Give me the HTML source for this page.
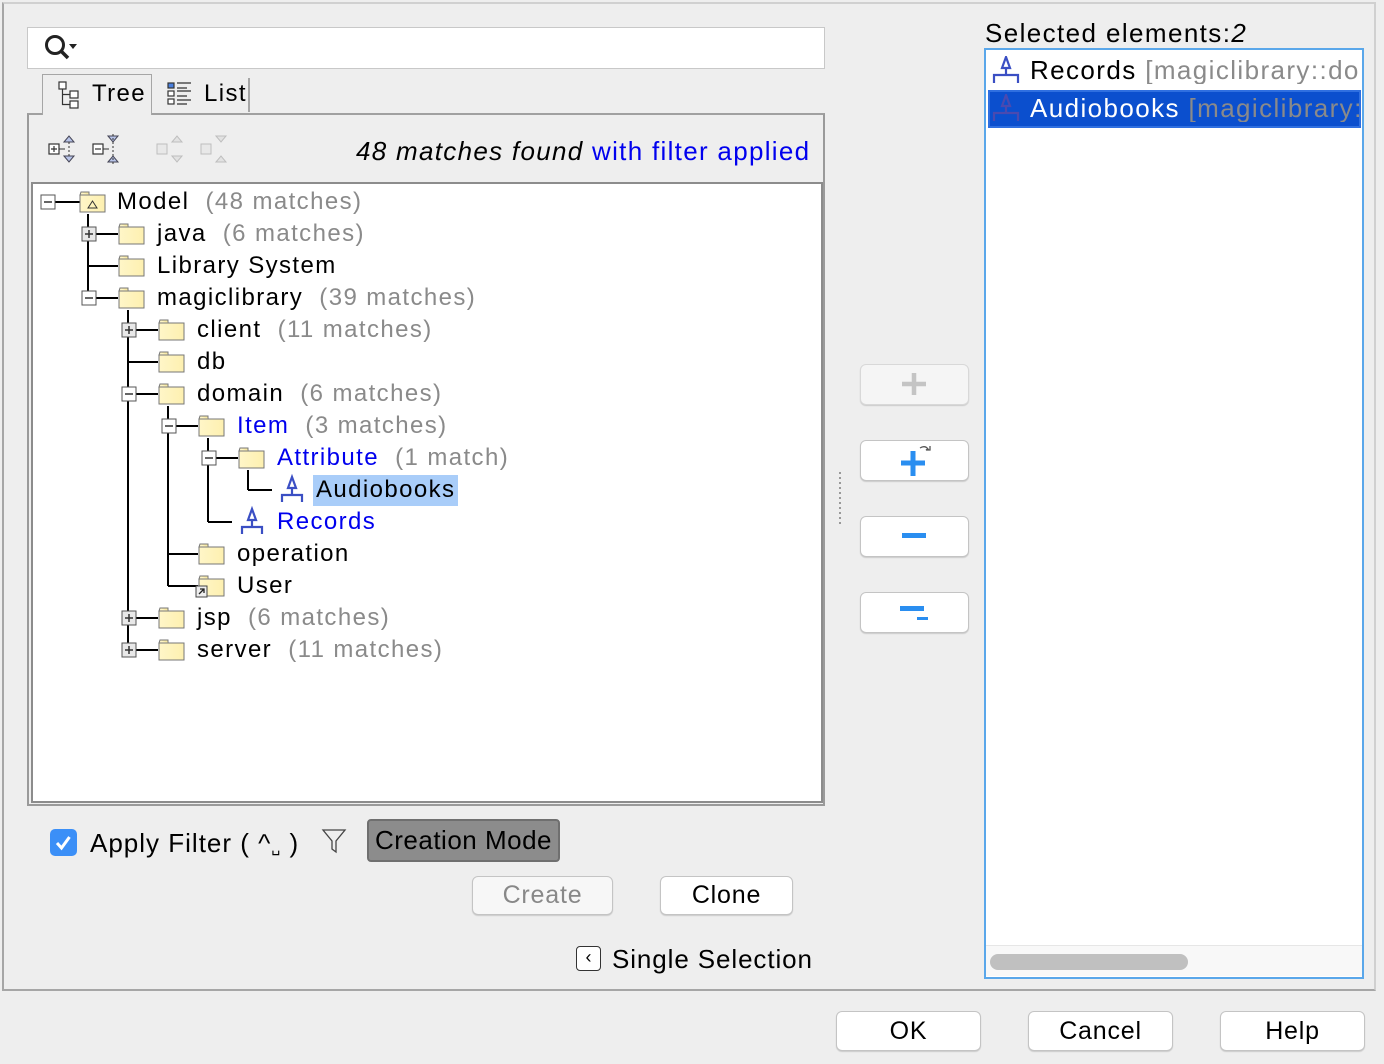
<!DOCTYPE html>
<html><head><meta charset="utf-8"><style>
*{box-sizing:border-box;margin:0;padding:0}
body{width:1384px;height:1064px;background:#eeeeee;font-family:"Liberation Sans",sans-serif;position:relative;overflow:hidden;color:#000}
.a{position:absolute}
.t{position:absolute;font-size:24px;line-height:28px;white-space:nowrap;letter-spacing:1.4px}
.g{color:#8a8a8a}
.b{color:#0000ee}
.btn{position:absolute;background:#fff;border:1px solid #c4c4c4;border-radius:6px;box-shadow:0 1px 1px rgba(0,0,0,.15);font-size:25px;text-align:center;letter-spacing:0.8px}
</style></head><body>
<div class="a" style="left:2px;top:2px;width:1374px;height:989px;border:2px solid #a6a6a6;border-top-color:#d0d0d0;border-right-color:#d0d0d0"></div>

<div class="a" style="left:27px;top:27px;width:798px;height:42px;background:#fff;border:1px solid #c8c8c8"></div>
<svg class="a" style="left:40px;top:32px" width="40" height="32"><circle cx="15" cy="13" r="8.5" fill="none" stroke="#222" stroke-width="3"/><line x1="21" y1="19" x2="28" y2="26" stroke="#222" stroke-width="3.5"/><path d="M29 12h8l-4 5z" fill="#222"/></svg>

<div class="a" style="left:27px;top:113px;width:798px;height:693px;border:2px solid #9a9a9a;border-top-color:#a0a0a0"></div>
<div class="a" style="left:42px;top:74px;width:110px;height:41px;background:#eee;border:1px solid #a6a6a6;border-bottom:none"></div>
<div class="a" style="left:248px;top:78px;width:2px;height:34px;background:#a6a6a6"></div>
<svg class="a" style="left:56px;top:80px" width="28" height="30"><g fill="#fff" stroke="#333" stroke-width="1.2"><rect x="3" y="2" width="7" height="7"/><rect x="14" y="11" width="8" height="7"/><rect x="14" y="21" width="8" height="7"/></g><path d="M6.5 9v15.5h7.5M6.5 14.5h7.5" fill="none" stroke="#333" stroke-width="1.2"/></svg>
<div class="t" style="left:92px;top:80px">Tree</div>
<svg class="a" style="left:165px;top:80px" width="32" height="30"><g fill="#fff" stroke="#333" stroke-width="1.2"><rect x="3" y="3" width="6" height="5" fill="#4a80e0"/><rect x="3" y="11" width="6" height="5"/><rect x="3" y="19" width="6" height="5"/></g><path d="M12 3h14M12 8h10M12 11h14M12 16h10M12 20h14M12 24h10" stroke="#333" stroke-width="1.3"/></svg>
<div class="t" style="left:204px;top:80px">List</div>

<svg class="a" style="left:46px;top:134px" width="200" height="34">
<g stroke="#333" fill="#fff" stroke-width="1.2"><rect x="3" y="10" width="10" height="10"/><path d="M5 15h6M8 12v6"/><rect x="47" y="10" width="10" height="10"/><path d="M49 15h6"/></g>
<path d="M13 15h6M57 15h6" stroke="#333"/>
<g fill="#b8c4e8" stroke="#445"><path d="M18 8l5-6 5 6z"/><path d="M18 22l5 6 5-6z"/><path d="M62 2l5 6 5-6z"/><path d="M62 28l5-6 5 6z"/></g>
<path d="M23 8v14M67 0v30" stroke="#333" stroke-dasharray="2 2"/>
<g opacity=".35"><g stroke="#666" fill="#ddd"><rect x="111" y="10" width="10" height="10"/><rect x="155" y="10" width="10" height="10"/><path d="M126 8l5-6 5 6zM126 22l5 6 5-6zM170 2l5 6 5-6zM170 28l5-6 5 6z" fill="#ccc"/></g></g>
</svg>
<div class="t" style="left:356px;top:137px;font-size:26px;letter-spacing:1.3px"><i>48 matches found</i> <span class="b">with filter applied</span></div>

<div class="a" style="left:31px;top:182px;width:792px;height:621px;background:#fff;border:2px solid #8c8c8c"></div>

<svg class="a" style="left:0;top:0" width="830" height="700">
<g stroke="#000" stroke-width="2" fill="none">
<path d="M88 214V298M128 310V650M168 406V586M208 438V522M248 470V490"/>
<path d="M48 202h32M88 234h30M88 266h30M88 298h30M128 330h30M128 362h30M128 394h30M128 618h30M128 650h30M168 426h30M168 554h30M168 586h30M208 458h30M248 490h24M208 522h24"/>
</g>
<defs>
<linearGradient id="fg" x1="0" x2="1"><stop offset="0" stop-color="#fff6c8"/><stop offset="1" stop-color="#fdf0b0"/></linearGradient>
<g id="fold"><path d="M0 4h9v-3h-8zM0 4h25v17h-25z" fill="url(#fg)" stroke="#777" stroke-width="1"/><path d="M1 1h8v3" fill="#f8eaa6" stroke="#777"/></g>
<g id="attr" stroke="#3b4fc4" stroke-width="2.2" fill="none"><path d="M12 1l-4 11h8z" fill="#fff"/><path d="M12 12v7M2 26v-7h20v7"/></g>
<g id="pl"><rect x="-7" y="-7" width="14" height="14" fill="#e8e8e8" stroke="#555"/><path d="M-4 0h8M0 -4v8" stroke="#333" stroke-width="1.5"/></g>
<g id="mi"><rect x="-7" y="-7" width="14" height="14" fill="#fff" stroke="#555"/><path d="M-4 0h8" stroke="#333" stroke-width="1.5"/></g>
</defs>
<use href="#mi" x="48" y="202"/><use href="#pl" x="89" y="234"/><use href="#mi" x="89" y="298"/>
<use href="#pl" x="129" y="330"/><use href="#mi" x="129" y="394"/><use href="#mi" x="169" y="426"/><use href="#mi" x="209" y="458"/>
<use href="#pl" x="129" y="618"/><use href="#pl" x="129" y="650"/>
<use href="#fold" x="80" y="191"/><path d="M88 208l4.5-7 4.5 7z" fill="none" stroke="#333"/>
<use href="#fold" x="119" y="223"/><use href="#fold" x="119" y="255"/><use href="#fold" x="119" y="287"/>
<use href="#fold" x="159" y="319"/><use href="#fold" x="159" y="351"/><use href="#fold" x="159" y="383"/>
<use href="#fold" x="199" y="415"/><use href="#fold" x="239" y="447"/>
<use href="#fold" x="199" y="543"/><use href="#fold" x="199" y="575"/>
<rect x="196" y="586" width="11" height="11" fill="#eee" stroke="#444"/><path d="M199 594l5-5M200 589h4v4" stroke="#222" fill="none" stroke-width="1.3"/>
<use href="#fold" x="159" y="607"/><use href="#fold" x="159" y="639"/>
<use href="#attr" x="280" y="476"/><use href="#attr" x="240" y="508"/>
</svg>
<div class="a" style="left:313px;top:475px;width:145px;height:31px;background:#a9cdf9"></div>
<div class="t" style="left:117px;top:188px">Model <span class="g">&nbsp;(48 matches)</span></div>
<div class="t" style="left:157px;top:220px">java <span class="g">&nbsp;(6 matches)</span></div>
<div class="t" style="left:157px;top:252px">Library System</div>
<div class="t" style="left:157px;top:284px">magiclibrary <span class="g">&nbsp;(39 matches)</span></div>
<div class="t" style="left:197px;top:316px">client <span class="g">&nbsp;(11 matches)</span></div>
<div class="t" style="left:197px;top:348px">db</div>
<div class="t" style="left:197px;top:380px">domain <span class="g">&nbsp;(6 matches)</span></div>
<div class="t" style="left:237px;top:412px"><span class="b">Item</span> <span class="g">&nbsp;(3 matches)</span></div>
<div class="t" style="left:277px;top:444px"><span class="b">Attribute</span> <span class="g">&nbsp;(1 match)</span></div>
<div class="t" style="left:316px;top:476px">Audiobooks</div>
<div class="t b" style="left:277px;top:508px">Records</div>
<div class="t" style="left:237px;top:540px">operation</div>
<div class="t" style="left:237px;top:572px">User</div>
<div class="t" style="left:197px;top:604px">jsp <span class="g">&nbsp;(6 matches)</span></div>
<div class="t" style="left:197px;top:636px">server <span class="g">&nbsp;(11 matches)</span></div>

<div class="a" style="left:50px;top:829px;width:27px;height:27px;background:#3b8ff7;border-radius:5px"></div>
<svg class="a" style="left:50px;top:829px" width="27" height="27"><path d="M7 14l4.5 5 8-11" stroke="#fff" stroke-width="3" fill="none"/></svg>
<div class="t" style="left:90px;top:829px;font-size:26px;letter-spacing:1px">Apply Filter ( ^<span style="font-size:14px">␣</span> )</div>
<svg class="a" style="left:321px;top:828px" width="26" height="26"><path d="M2 2h22l-9 11v11l-4 -3v-8z" fill="none" stroke="#444" stroke-width="1.3"/></svg>
<div class="a" style="left:367px;top:819px;width:193px;height:43px;background:#8c8c8c;border:2px solid #6f6f6f;border-radius:4px;font-size:26px;line-height:38px;text-align:center;letter-spacing:0.5px">Creation Mode</div>
<div class="btn" style="left:472px;top:876px;width:141px;height:39px;line-height:37px;color:#888;background:#f7f7f7">Create</div>
<div class="btn" style="left:660px;top:876px;width:133px;height:39px;line-height:37px">Clone</div>
<div class="a" style="left:576px;top:946px;width:25px;height:25px;border:1.5px solid #333;border-radius:4px;background:#fff;text-align:center;font-size:18px;line-height:21px">‹</div>
<div class="t" style="left:612px;top:945px;font-size:26px;letter-spacing:0.9px">Single Selection</div>

<svg class="a" style="left:837px;top:470px" width="6" height="56"><path d="M3 2v52" stroke="#999" stroke-width="2" stroke-dasharray="2 3"/></svg>
<div class="btn" style="left:860px;top:364px;width:109px;height:41px;background:#f5f5f5;border-color:#d8d8d8"></div>
<svg class="a" style="left:900px;top:372px" width="28" height="24"><path d="M14 1v22M2 12h24" stroke="#c4c4c4" stroke-width="4.5"/></svg>
<div class="btn" style="left:860px;top:440px;width:109px;height:41px"></div>
<svg class="a" style="left:898px;top:444px" width="36" height="34"><path d="M15 7v25M3 19h24" stroke="#2a8ef0" stroke-width="5"/><path d="M22 4q5-3 8 1l-2 1h4v-4" fill="none" stroke="#555" stroke-width="1.3"/></svg>
<div class="btn" style="left:860px;top:516px;width:109px;height:41px"></div>
<div class="a" style="left:902px;top:533px;width:24px;height:5px;background:#2a8ef0"></div>
<div class="btn" style="left:860px;top:592px;width:109px;height:41px"></div>
<div class="a" style="left:900px;top:606px;width:24px;height:5px;background:#2a8ef0"></div>
<div class="a" style="left:917px;top:617px;width:11px;height:3px;background:#2a8ef0"></div>

<div class="t" style="left:985px;top:19px;font-size:26px;letter-spacing:1.4px">Selected elements:<i>2</i></div>
<div class="a" style="left:984px;top:48px;width:380px;height:931px;background:#fff;border:2px solid #5aa7ea"></div>
<svg class="a" style="left:990px;top:56px" width="32" height="30"><path d="M16 1l-4 11h8z" fill="#fff" stroke="#3b4fc4" stroke-width="2.2"/><path d="M16 12v7M4 27v-8h24v8" fill="none" stroke="#3b4fc4" stroke-width="2.2"/></svg>
<div class="t" style="left:1030px;top:56px;font-size:26px;width:330px;overflow:hidden">Records <span class="g">[magiclibrary::domain]</span></div>
<div class="a" style="left:988px;top:90px;width:373px;height:38px;background:#0b4fce;border:2px solid #2f6fe0"></div>
<svg class="a" style="left:990px;top:94px" width="32" height="30"><path d="M16 1l-4 11h8z" fill="none" stroke="#4a4ab0" stroke-width="2.2"/><path d="M16 12v7M4 27v-8h24v8" fill="none" stroke="#4a4ab0" stroke-width="2.2"/></svg>
<div class="t" style="left:1030px;top:94px;font-size:26px;width:330px;overflow:hidden;color:#fff">Audiobooks <span style="color:#8a8a8a">[magiclibrary::domain]</span></div>
<div class="a" style="left:986px;top:945px;width:376px;height:31px;background:#f8f8f8;border-top:1px solid #e6e6e6"></div>
<div class="a" style="left:990px;top:954px;width:198px;height:16px;background:#c0c0c0;border-radius:8px"></div>

<div class="btn" style="left:836px;top:1011px;width:145px;height:40px;line-height:38px">OK</div>
<div class="btn" style="left:1028px;top:1011px;width:145px;height:40px;line-height:38px">Cancel</div>
<div class="btn" style="left:1220px;top:1011px;width:145px;height:40px;line-height:38px">Help</div>
</body></html>
